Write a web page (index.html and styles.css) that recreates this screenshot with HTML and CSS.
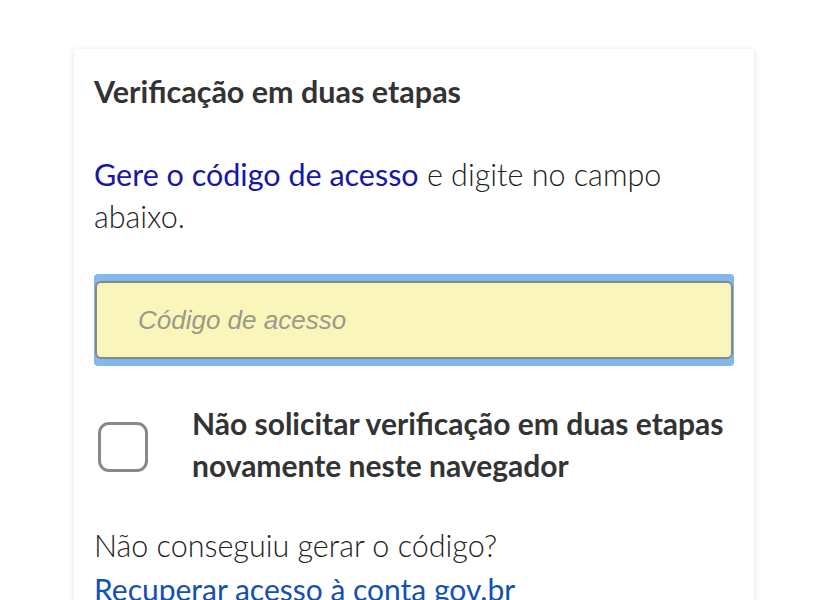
FILE: index.html
```html
<!DOCTYPE html>
<html lang="pt-BR">
<head>
<meta charset="utf-8">
<link rel="stylesheet" href="styles.css">
</head>
<body>
<main class="page">
  <section class="card">
    <h1 class="title">Verificação em duas etapas</h1>
    <p class="intro"><a class="link-dark" href="#">Gere o código de acesso</a> e digite no campo abaixo.</p>
    <div class="field-ring">
      <input class="field" type="text" placeholder="Código de acesso">
    </div>
    <label class="check-row">
      <span class="box"></span>
      <span class="check-label">Não solicitar verificação em duas etapas novamente neste navegador</span>
    </label>
    <p class="help">Não conseguiu gerar o código?</p>
    <a class="link" href="#">Recuperar acesso à conta gov.br</a>
  </section>
</main>
</body>
</html>
```

FILE: styles.css
```css
* { box-sizing: border-box; }
html, body { margin: 0; padding: 0; background: #ffffff; }
body { font-family: "Lato", "Open Sans", sans-serif; color: #333333; }
.page { padding: 49px 73px 0 74px; }
.card {
  background: #fff;
  box-shadow: 0 1px 6px rgba(0,0,0,0.12);
  border-radius: 2px;
  padding: 20px 20px 40px 20px;
  min-height: 700px;
}
.title { margin: 0; font-size: 30.5px; font-weight: 700; line-height: 44px; color: #333; }
.intro { margin: 40px 0 0; font-size: 30.5px; line-height: 42px; font-weight: 300; color: #222; }
.link-dark { color: #1717a8; text-decoration: none; font-weight: 400; }
.field-ring {
  margin-top: 37px;
  background: #83b8ee;
  border-radius: 4px;
  padding: 7px 1px 7px 1px;
}
.field {
  display: block; width: 100%; height: 78px;
  background: #faf6bb;
  border: 2px solid #888;
  border-radius: 6px;
  padding: 0 41px;
  font-family: "Liberation Sans", sans-serif;
  font-size: 26px;
  outline: none;
}
.field::placeholder { color: #9b9a88; font-style: italic; }
.check-row { display: flex; align-items: center; gap: 44px; margin-top: 36px; padding-left: 4px; }
.box { flex: none; width: 50px; height: 50px; margin-top: 6px; border: 3px solid #888; border-radius: 11px; }
.check-label { font-size: 30px; font-weight: 700; line-height: 42px; }
.help { margin: 37px 0 0; font-size: 30.5px; line-height: 44px; font-weight: 300; color: #222; }
.link { display: block; color: #1351b4; text-decoration: none; font-size: 30px; line-height: 44px; }
```
